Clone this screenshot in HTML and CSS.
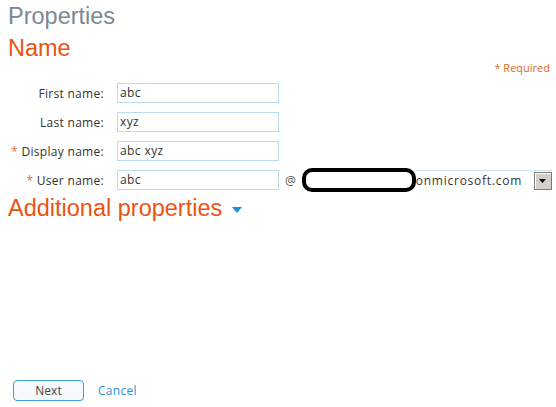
FILE: index.html
```html
<!DOCTYPE html>
<html>
<head>
<meta charset="utf-8">
<link rel="stylesheet" href="styles.css">
</head>
<body>
<div class="page">
  <h1 class="title">Properties</h1>
  <h2 class="section">Name</h2>
  <div class="required"><span class="star">*</span> Required</div>
  <div class="form">
    <div class="row">
      <label class="label">First name:</label>
      <div class="field">abc</div>
    </div>
    <div class="row">
      <label class="label">Last name:</label>
      <div class="field">xyz</div>
    </div>
    <div class="row">
      <label class="label"><span class="star">*</span> Display name:</label>
      <div class="field">abc xyz</div>
    </div>
    <div class="row">
      <label class="label"><span class="star">*</span> User name:</label>
      <div class="field">abc</div>
      <span class="at">@</span>
      <div class="redact"></div>
      <div class="select">
        <span class="select-text">onmicrosoft.com</span>
        <span class="select-btn"><svg width="7" height="4" viewBox="0 0 7 4"><path d="M0 0H7L3.5 4Z" fill="#000"/></svg></span>
      </div>
    </div>
  </div>
  <h2 class="section additional">Additional properties <svg class="caret" width="10" height="6" viewBox="0 0 10 6"><path d="M0 0H10L5 6Z" fill="#1a8fd6"/></svg></h2>
  <div class="spacer"></div>
  <div class="actions">
    <button class="btn">Next</button>
    <a class="link">Cancel</a>
  </div>
</div>
</body>
</html>
```
FILE: styles.css
```css
html, body {
  margin: 0;
  padding: 0;
  background: #fff;
}
.page {
  width: 556px;
  height: 407px;
  display: flex;
  flex-direction: column;
  padding: 0 0 0 8px;
  box-sizing: border-box;
  font-family: "Open Sans", "Noto Sans", sans-serif;
}
.title {
  margin: 2px 0 0 0;
  font-family: "Liberation Sans", Arial, sans-serif;
  font-weight: normal;
  font-size: 23.5px;
  line-height: 28px;
  color: #7d8894;
}
.section {
  margin: 4px 0 0 0;
  font-family: "Liberation Sans", Arial, sans-serif;
  font-weight: normal;
  font-size: 23.5px;
  line-height: 28px;
  color: #ea5410;
}
.required {
  align-self: flex-end;
  margin: -2px 6px 0 0;
  font-size: 11px;
  line-height: 16px;
  color: #e0661a;
}
.star {
  color: #e7702a;
}
.form {
  display: flex;
  flex-direction: column;
  gap: 9px;
  margin-top: 7px;
}
.row {
  display: flex;
  align-items: center;
  height: 20px;
}
.label {
  width: 96px;
  text-align: right;
  font-size: 12px;
  color: #333;
  letter-spacing: 0.3px;
}
.field {
  margin-left: 13px;
  width: 158px;
  height: 18px;
  border: 1px solid #bcdbf3;
  font-size: 12px;
  line-height: 18px;
  padding-left: 2px;
  box-sizing: content-box;
  color: #333;
  letter-spacing: 0.4px;
}
.at {
  margin-left: 6px;
  font-size: 12px;
  color: #555;
}
.redact {
  margin-left: 6px;
  width: 106px;
  height: 16px;
  border: 4px solid #000;
  border-radius: 10px;
  flex-shrink: 0;
}
.select {
  margin-left: -2px;
  display: flex;
  align-items: center;
  justify-content: space-between;
  width: 138px;
  height: 20px;
  border-top: 1px solid #cfe3f3;
  box-sizing: border-box;
}
.select-text {
  font-size: 12px;
  color: #333;
  letter-spacing: 0.75px;
  padding-left: 2px;
}
.select-btn {
  width: 16px;
  height: 16px;
  border: 1px solid #7a7a7a;
  background: #d4d0c8;
  display: flex;
  align-items: center;
  justify-content: center;
  box-shadow: inset 1px 1px 0 #fff;
}
.additional {
  margin-top: 4px;
  display: flex;
  align-items: center;
  gap: 10px;
}
.caret {
  margin-top: 4px;
}
.spacer {
  flex: 1;
}
.actions {
  display: flex;
  align-items: center;
  gap: 14px;
  margin: 0 0 6px 5px;
}
.btn {
  width: 71px;
  height: 21px;
  border: 1px solid #3da0da;
  border-radius: 4px;
  background: #f6fafd;
  font-family: "Open Sans", "Noto Sans", sans-serif;
  font-size: 12px;
  color: #444;
  padding: 0;
}
.link {
  font-size: 12px;
  color: #2a8fd8;
  letter-spacing: 0.3px;
}
```
